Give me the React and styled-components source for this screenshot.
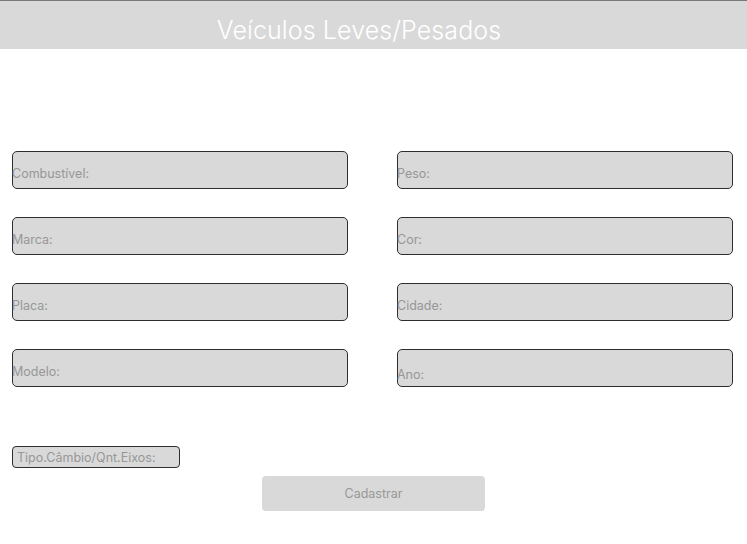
import React from 'react';
import styled, {createGlobalStyle} from 'styled-components';

const GlobalStyle = createGlobalStyle`
    body {
        margin:0;
        background:#fff;
        font-family: Inter, "Noto Sans", sans-serif;
    }
`;

const Page = styled.div`
    width:747px;
    min-height:544px;
    display:flex;
    flex-direction:column;
`;

const Header = styled.header`
    height:48px;
    box-sizing:content-box;
    border-top:1px solid #7a7a7a;
    background-color:#d9d9d9;
    display:flex;
    align-items:center;
    justify-content:center;
    padding-right:29px;
`;

const Title = styled.h1`
    margin:10px 0 0;
    font-size:25px;
    font-weight:300;
    color:#fff;
    letter-spacing:0.1px;
`;

const Form = styled.div`
    margin-top:102px;
    padding-left:12px;
    display:grid;
    grid-template-columns:336px 336px;
    column-gap:49px;
    row-gap:28px;
`;

const Field = styled.div`
    height:38px;
    box-sizing:border-box;
    border:1px solid #2e2e2e;
    border-bottom-width:1.5px;
    border-radius:5px;
    background:#d9d9d9;
    display:flex;
    align-items:flex-end;
    padding-bottom:${p => p.$low ? 4 : 7}px;
    font-size:12.5px;
    color:#979797;
    line-height:15px;
`;

const Label = styled.span`
    margin-left:-1px;
`;

const Footer = styled.div`
    margin-top:59px;
    display:flex;
    flex-direction:column;
`;

const Small = styled.div`
    margin-left:12px;
    width:168px;
    height:22px;
    box-sizing:border-box;
    border:1px solid #2e2e2e;
    border-radius:4px;
    background:#d9d9d9;
    display:flex;
    align-items:center;
    padding-left:4px;
    font-size:12.5px;
    color:#979797;
`;

const Button = styled.button`
    align-self:center;
    margin-top:8px;
    width:223px;
    height:35px;
    border:none;
    border-radius:4px;
    background:#d9d9d9;
    color:#979797;
    font-family:inherit;
    font-size:12.5px;
`;

const fields = [
    ['Combustível:'], ['Peso:'],
    ['Marca:'], ['Cor:'],
    ['Placa:'], ['Cidade:'],
    ['Modelo:'], ['Ano:', true],
];

export default function App() {
    return (
        <Page>
            <GlobalStyle/>
            <Header>
                <Title>Veículos Leves/Pesados</Title>
            </Header>
            <Form>
                {fields.map(([label, low]) => (
                    <Field key={label} $low={low}><Label>{label}</Label></Field>
                ))}
            </Form>
            <Footer>
                <Small>Tipo.Câmbio/Qnt.Eixos:</Small>
                <Button>Cadastrar</Button>
            </Footer>
        </Page>
    );
}
